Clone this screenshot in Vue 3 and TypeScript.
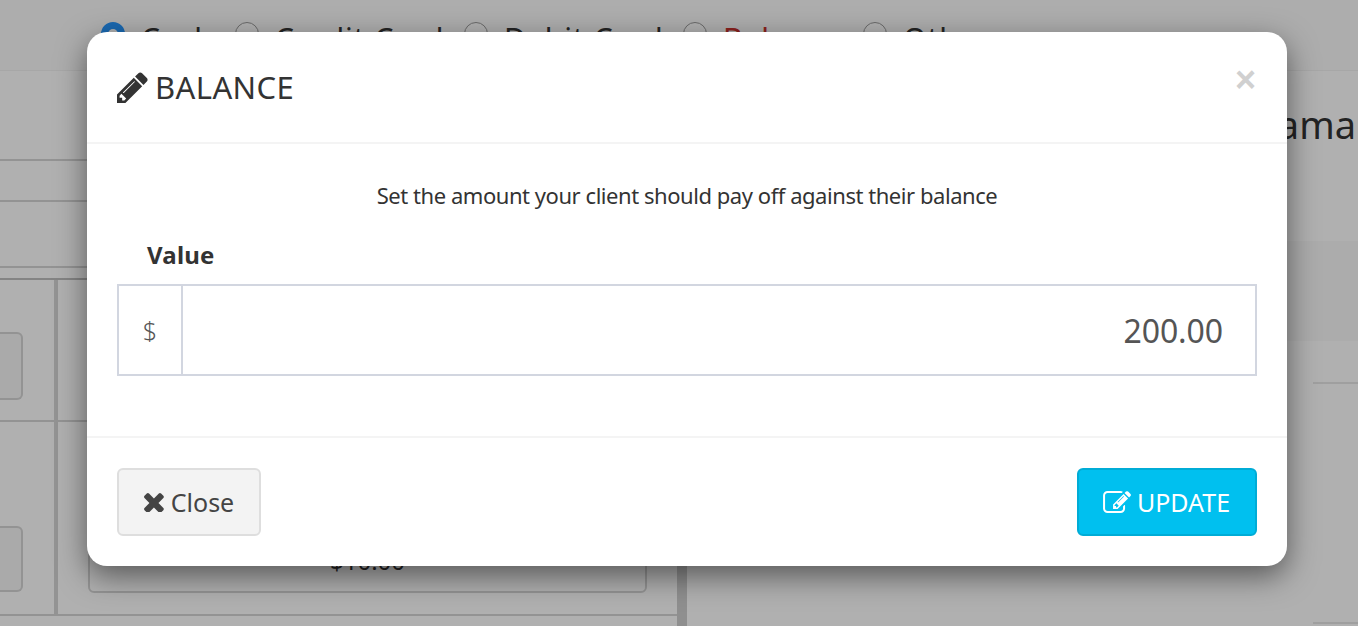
<script setup lang="ts">
const payments = [
  { label: 'Cash', checked: true, width: 134 },
  { label: 'Credit Card', checked: false, width: 229 },
  { label: 'Debit Card', checked: false, width: 219 },
  { label: 'Balance', checked: false, width: 180, due: true },
  { label: 'Other', checked: false, width: 120 },
]
</script>

<template>
  <div class="page">
    <div class="topbar">
      <label v-for="p in payments" :key="p.label" class="radio" :style="{ width: p.width + 'px' }">
        <span class="dot" :class="{ on: p.checked }"></span>
        <span :class="{ due: p.due }">{{ p.label }}</span>
      </label>
    </div>
    <div class="main">
      <section class="left">
        <div class="strip s1"></div>
        <div class="strip s2"></div>
        <div class="strip s3"></div>
        <div class="strip s4"></div>
        <div class="grid">
          <div class="c1 r1"><div class="stub"></div></div>
          <div class="c2 r1"></div>
          <div class="c1 r2"><div class="stub short"></div></div>
          <div class="c2 r2"><div class="amount">$10.00</div></div>
        </div>
      </section>
      <div class="divider"></div>
      <section class="right">
        <div class="title">ama</div>
        <div class="band"></div>
        <div class="rule r-a"></div>
        <div class="rule r-b"></div>
      </section>
    </div>

    <div class="backdrop">
      <div class="modal">
        <header class="m-head">
          <h4>
            <svg class="ic-pencil" viewBox="128 128 1536 1536" aria-hidden="true"><path d="M491 1536l91-91-235-235-91 91v107h128v128h107zm523-928q0-22-22-22-10 0-17 7l-542 542q-7 7-7 17 0 22 22 22 10 0 17-7l542-542q7-7 7-17zm-54-192l416 416-832 832h-416v-416zm683 96q0 53-37 90l-166 166-416-416 166-165q36-38 90-38 53 0 91 38l235 234q37 39 37 91z"/></svg>
            <span>BALANCE</span>
          </h4>
          <button class="x" type="button">×</button>
        </header>
        <div class="m-body">
          <p class="hint">Set the amount your client should pay off against their balance</p>
          <div class="lbl">Value</div>
          <div class="field">
            <span class="addon">$</span>
            <span class="val">200.00</span>
          </div>
        </div>
        <footer class="m-foot">
          <button class="btn close" type="button">
            <svg class="ic-x" viewBox="300 300 1200 1200" aria-hidden="true"><path d="M1490 1322q0 40-28 68l-136 136q-28 28-68 28t-68-28l-294-294-294 294q-28 28-68 28t-68-28l-136-136q-28-28-28-68t28-68l294-294-294-294q-28-28-28-68t28-68l136-136q28-28 68-28t68 28l294 294 294-294q28-28 68-28t68 28l136 136q28 28 28 68t-28 68l-294 294 294 294q28 28 28 68z"/></svg>
            <span>Close</span>
          </button>
          <button class="btn update" type="button">
            <svg class="ic-edit" viewBox="0 128 1784 1408" aria-hidden="true"><path d="M888 1184l116-116-152-152-116 116v56h96v96h56zm440-720q-16-16-33 1l-350 350q-17 17-1 33t33-1l350-350q17-17 1-33zm80 594v190q0 119-84.5 203.5t-203.5 84.5h-832q-119 0-203.5-84.5t-84.5-203.5v-832q0-119 84.5-203.5t203.5-84.5h832q63 0 117 25 15 7 18 23 3 17-9 29l-49 49q-14 14-32 8-23-6-45-6h-832q-66 0-113 47t-47 113v832q0 66 47 113t113 47h832q66 0 113-47t47-113v-126q0-13 9-22l64-64q15-15 35-7t20 29zm-96-738l288 288-672 672h-288v-288zm444 132l-92 92-288-288 92-92q28-28 68-28t68 28l152 152q28 28 28 68t-28 68z"/></svg>
            <span>UPDATE</span>
          </button>
        </footer>
      </div>
    </div>
  </div>
</template>

<style>
html, body { margin: 0; height: 100%; overflow: hidden; background: #fff; }
</style>

<style scoped>
.page {
  position: relative;
  width: 1358px;
  height: 626px;
  overflow: hidden;
  background: #fff;
  font-family: "Noto Sans", "Open Sans", sans-serif;
  color: #333;
}
.topbar {
  box-sizing: border-box;
  height: 71px;
  padding: 22px 0 0 101px;
  display: flex;
  align-items: flex-start;
  background: #fbfbfb;
  border-bottom: 1px solid #f2f2f2;
  font-size: 30px;
  line-height: 34px;
  letter-spacing: 1px;
}
.radio { display: flex; gap: 16px; flex: none; }
.dot {
  flex: none;
  box-sizing: border-box;
  width: 24px;
  height: 24px;
  border-radius: 50%;
  border: 1px solid #999;
  background: #fff;
}
.dot.on { border: 7px solid #2797ff; }
.due { color: #c9302c; }
.main { display: flex; height: 555px; }
.left { width: 677px; flex: none; }
.strip { box-sizing: border-box; border-bottom: 2px solid #d5d5d5; }
.s1 { height: 90px; }
.s2 { height: 41px; }
.s3 { height: 66px; }
.s4 { height: 12px; border-bottom-color: #c0c0c0; }
.grid {
  display: grid;
  grid-template-columns: 54px 1fr;
  grid-template-rows: 142px 194px;
}
.c1, .c2 { border-bottom: 2px solid #d5d5d5; box-sizing: border-box; }
.c1 { border-right: 4px solid #d5d5d5; width: 58px; }
.stub {
  box-sizing: border-box;
  width: 23px;
  height: 68px;
  background: #f6f6f6;
  border: 2px solid #d5d5d5;
  border-left: 0;
  border-radius: 0 6px 6px 0;
}
.stub.short { height: 66px; }
.c1.r1 { padding-top: 52px; }
.c1.r2 { padding-top: 104px; }
.c2 { margin-left: 4px; }
.c2.r2 { padding: 105px 30px 0 30px; }
.amount {
  box-sizing: border-box;
  height: 66px;
  width: 559px;
  border: 2px solid #d5d5d5;
  border-radius: 0 0 6px 6px;
  text-align: center;
  font-size: 24px;
  line-height: 64px;
}
.divider { width: 10px; flex: none; background: #d0d0d0; }
.right { flex: 1; min-width: 0; overflow: hidden; }
.title {
  height: 170px;
  padding-top: 28px;
  padding-right: 2px;
  box-sizing: border-box;
  text-align: right;
  font-size: 38px;
  line-height: 50px;
}
.band { height: 100px; background: #fafafa; }
.rule { margin-left: 626px; border-bottom: 2px solid #e6e6e6; }
.r-a { margin-top: 41px; }
.r-b { margin-top: 238px; }

.backdrop {
  position: absolute;
  inset: 0;
  box-sizing: border-box;
  padding: 32px 0 0 87px;
  background: rgba(0, 0, 0, 0.31);
}
.modal {
  width: 1200px;
  height: 534px;
  background: #fff;
  border-radius: 20px;
  box-shadow: 0 10px 30px rgba(0, 0, 0, 0.5);
  display: flex;
  flex-direction: column;
}
.m-head {
  box-sizing: border-box;
  height: 112px;
  padding: 0 30px;
  border-bottom: 2px solid #f4f4f4;
  display: flex;
  justify-content: space-between;
  align-items: center;
}
h4 {
  margin: 0;
  display: flex;
  align-items: center;
  gap: 7px;
  font-size: 31px;
  font-weight: 400;
  letter-spacing: 0.4px;
  color: #333;
}
.ic-pencil { width: 31px; height: 31px; fill: #333; }
.x {
  border: 0;
  background: none;
  padding: 0;
  margin: -14px 1px 0 0;
  font-family: "Liberation Sans", sans-serif;
  font-size: 36px;
  font-weight: 700;
  line-height: 1;
  color: #d0d0d0;
}
.m-body {
  flex: 1;
  padding: 0 30px;
}
.hint {
  margin: 35px 0 0;
  text-align: center;
  font-size: 22px;
  line-height: 32px;
  letter-spacing: -0.45px;
  color: #333;
}
.lbl {
  margin: 28px 0 0 30px;
  font-size: 24px;
  line-height: 32px;
  font-weight: 700;
  letter-spacing: 0.2px;
}
.field {
  margin-top: 13px;
  box-sizing: border-box;
  height: 92px;
  display: flex;
  border: 2px solid #d2d6e0;
}
.addon {
  width: 64px;
  flex: none;
  box-sizing: border-box;
  border-right: 2px solid #d2d6e0;
  display: flex;
  align-items: center;
  justify-content: center;
  font-size: 25px;
  font-weight: 300;
  color: #555;
}
.val {
  flex: 1;
  text-align: right;
  padding-right: 32px;
  font-size: 32px;
  line-height: 90px;
  letter-spacing: -0.1px;
  color: #555;
}
.m-foot {
  box-sizing: border-box;
  height: 130px;
  padding: 30px;
  border-top: 2px solid #f4f4f4;
  display: flex;
  justify-content: space-between;
}
.btn {
  box-sizing: border-box;
  height: 68px;
  border-radius: 6px;
  display: inline-flex;
  align-items: center;
  justify-content: center;
  gap: 7px;
  padding: 0;
  font-family: inherit;
  font-size: 25px;
}
.close {
  width: 144px;
  background: #f3f3f3;
  border: 2px solid #dedede;
  color: #444;
}
.ic-x { width: 20px; height: 20px; fill: #444; }
.update {
  width: 180px;
  gap: 6px;
  padding-right: 1px;
  background: #00c0ef;
  border: 2px solid #00acd6;
  color: #fff;
}
.ic-edit { width: 28px; height: 22px; fill: #fff; }
</style>
